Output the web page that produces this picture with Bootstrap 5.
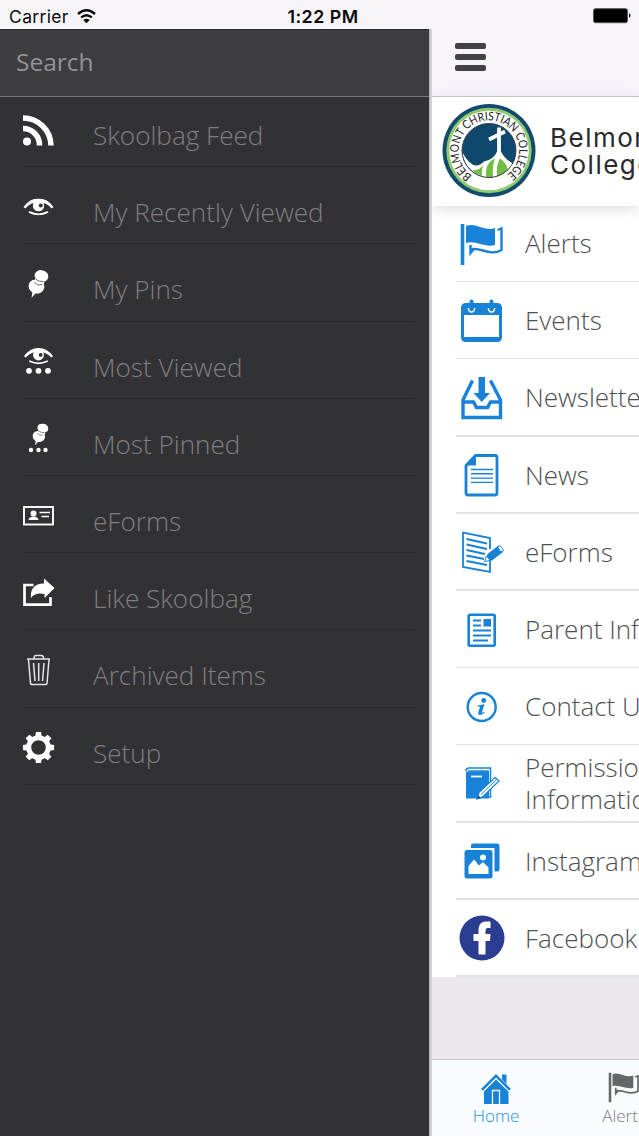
<!DOCTYPE html>
<html lang="en">
<head>
    <meta charset="UTF-8">
    <meta name="viewport" content="width=device-width, initial-scale=1.0">
    <title>Skoolbag</title>
    <link rel="stylesheet" href="https://cdn.jsdelivr.net/npm/bootstrap@5.3.2/dist/css/bootstrap.min.css">
    <style>
        body { font-family: "Open Sans", sans-serif; font-weight: 300; background: #f6f4f9; }
        .screen { height: 1136px; overflow: hidden; }
        svg { display: block; flex: none; }

        .status-bar { height: 29px; font: 400 17.5px/29px "Inter", sans-serif; color: #0a0a0a; padding: 3px 4px 0 9px; }
        .status-bar > div { width: 210px; }
        .carrier { letter-spacing: .35px; }
        .clock { font-weight: 600; font-size: 17.8px; letter-spacing: .5px; padding-left: 2px; }

        .drawer { width: 429px; background: #323133; }
        .search-box { height: 68px; background: #3d3c3e; border-bottom: 1px solid #777678; border-top: 1px solid #2b2a2c; padding: 0 0 1px 16px; color: #949396; font-size: 24.5px; font-weight: 400; }
        .drawer-list { margin-top: -7px; }
        .drawer-item { height: 77.2px; padding: 14px 0 0 22px; color: #7f7e82; font-size: 26.1px; }
        .drawer-item svg { margin: -11px 38px 0 0; width: 33px; height: 34px; color: #fff; }
        .drawer-line { height: 1px; margin: -1px 14px 0 24px; background: #29282a; }

        .edge { width: 3px; background: linear-gradient(90deg, #a9a8ac, #cfced2 50%, #d8d6db); }
        .main-nav { height: 68px; border-bottom: 1px solid #b9b8bb; padding: 14px 0 0 23px; gap: 5px; }
        .main-nav span { width: 31px; height: 6px; border-radius: 2px; background: #424144; }
        .school { height: 109px; background: #fff; padding: 0 0 2px 10px; box-shadow: 0 3px 14px #dddbe0; position: relative; }
        .school-name { font: 400 26px/27px "Inter", sans-serif; color: #2a2a2a; padding-left: 14px; letter-spacing: 1.5px; }
        .menu-row { height: 77.2px; padding: 0 0 1px 27px; background: #fff; color: #4e4f53; font-size: 26px; line-height: 32px; }
        .menu-row svg { width: 46px; height: 46px; margin: 1px 20px 0 0; color: #1782d8; }
        .menu-line { height: 1.6px; margin: -1.6px 0 0 24px; background: #e1e4e8; position: relative; }
        .filler { background: #eae8eb; }
        .tab-bar { height: 77px; background: #f9fcfe; border-top: 1px solid #c5c5c8; font-size: 17px; line-height: 20px; }
        .tab-bar > div { width: 128px; padding-top: 12px; gap: 1px; color: #7d7e82; }
        .tab-bar .tab-on { color: #1f8edc; }
    </style>
</head>
<body>
    <!-- shared icon shapes -->
    <svg width="0" height="0" class="position-absolute">
        <symbol id="eye" viewBox="0 0 33 18">
            <path d="M.5 9Q7 0 16.500 0Q26 0 32.500 9L30.500 10.500Q25 4 16.500 4Q8 4 2.500 10.500Z" fill="currentColor"/>
            <path d="M7 14.500Q16.500 19 26 14.500" fill="none" stroke="currentColor" stroke-width="1.900" stroke-linecap="round"/>
            <circle cx="16.500" cy="7.600" r="6" fill="currentColor"/>
            <circle cx="18.900" cy="7.500" r="2.100" fill="#323133"/>
        </symbol>
        <symbol id="pin" viewBox="0 0 20 28">
            <ellipse cx="13" cy="6" rx="7" ry="5.800" fill="currentColor" transform="rotate(15 13 6)"/>
            <path d="M7 9L16 12L14 17L5 14Z" fill="currentColor"/>
            <ellipse cx="8" cy="16.500" rx="8" ry="7" fill="currentColor" transform="rotate(15 8 16)"/>
            <path d="M6 12.500Q9 16.500 13.500 14.500M7.500 9.500Q11 12 15 11.500" fill="none" stroke="#323133" stroke-width=".7"/>
            <path d="M4 21.500L3 28L8 22Z" fill="currentColor"/>
        </symbol>
        <symbol id="flag" viewBox="0 0 46 46">
            <path d="M3.500 3v41" stroke="currentColor" stroke-width="3.600"/>
            <path d="M7 5C17 1 25 11 36 7V24C25 27 17 19 7 22Z" fill="currentColor"/>
            <path d="M38.500 9L42.500 7.500V29C30 36 21 25 11.500 28.500M11.500 24V32L15 28" fill="none" stroke="currentColor" stroke-width="2.400"/>
        </symbol>
    </svg>

    <div class="screen d-flex flex-column">
        <div class="status-bar d-flex justify-content-between align-items-center">
            <div class="carrier d-flex align-items-center">Carrier
                <svg class="ms-2" width="19" height="15" viewBox="0 0 19 15" fill="none" stroke="#0a0a0a" stroke-width="2.400">
                    <path d="M1 5Q9.500 -2.400 18 5M4.200 8.400Q9.500 4 14.800 8.400"/>
                    <path d="M9.500 14.300L6.300 11Q9.500 8.400 12.700 11Z" fill="#0a0a0a" stroke="none"/>
                </svg>
            </div>
            <div class="clock text-center">1:22 PM</div>
            <div class="d-flex justify-content-end">
                <svg width="42" height="16" viewBox="0 0 42 16"><rect x=".5" y=".7" width="34" height="14" rx="2" fill="#000" stroke="#555"/><path d="M36 5.300Q39 7.500 36 10Z"/></svg>
            </div>
        </div>

        <div class="d-flex flex-grow-1">
            <div class="drawer flex-shrink-0">
                <div class="search-box d-flex align-items-center">Search</div>
                <div class="drawer-list">
                    <div class="drawer-item d-flex align-items-center">
                        <svg viewBox="0 0 33 34" fill="none" stroke="currentColor" stroke-width="5.500"><circle cx="5" cy="28.500" r="4" fill="currentColor" stroke="none"/><path d="M1 15.500A16.500 16.500 0 0 1 17.500 32.500M1 5A28 28 0 0 1 29 32.500"/></svg>
                        Skoolbag Feed
                    </div>
                    <div class="drawer-line"></div>
                    <div class="drawer-item d-flex align-items-center">
                        <svg viewBox="0 0 33 34"><use href="#eye" x="1" y="8.500" width="31" height="17"/></svg>
                        My Recently Viewed
                    </div>
                    <div class="drawer-line"></div>
                    <div class="drawer-item d-flex align-items-center">
                        <svg viewBox="0 0 33 34"><use href="#pin" x="6.500" y="3" width="20" height="28"/></svg>
                        My Pins
                    </div>
                    <div class="drawer-line"></div>
                    <div class="drawer-item d-flex align-items-center">
                        <svg viewBox="0 0 33 34"><use href="#eye" x="1.500" y="3" width="30" height="16.500"/><g fill="currentColor"><circle cx="7" cy="25.800" r="2.900"/><circle cx="16.500" cy="25.800" r="2.900"/><circle cx="26" cy="25.800" r="2.900"/></g></svg>
                        Most Viewed
                    </div>
                    <div class="drawer-line"></div>
                    <div class="drawer-item d-flex align-items-center">
                        <svg viewBox="0 0 33 34"><use href="#pin" x="10.500" y="1.500" width="16" height="22"/><g fill="currentColor"><circle cx="9" cy="28" r="2.200"/><circle cx="16.500" cy="28" r="2.200"/><circle cx="23.500" cy="28" r="2.200"/></g></svg>
                        Most Pinned
                    </div>
                    <div class="drawer-line"></div>
                    <div class="drawer-item d-flex align-items-center">
                        <svg viewBox="0 0 33 34"><rect x="2" y="8" width="29" height="17.500" fill="none" stroke="currentColor" stroke-width="1.900"/><circle cx="11.500" cy="14.500" r="3" fill="currentColor"/><path d="M6.500 21Q7 17.500 11.500 17.500Q16 17.500 16.500 21Z" fill="currentColor"/><path d="M17.500 13.500H28M19.500 17.500H27" stroke="currentColor" stroke-width="1.500"/></svg>
                        eForms
                    </div>
                    <div class="drawer-line"></div>
                    <div class="drawer-item d-flex align-items-center">
                        <svg viewBox="0 0 33 34"><path d="M11.500 9H2.500V28.700H28.500V21" fill="none" stroke="currentColor" stroke-width="2.700"/><path d="M9 22Q7.500 8 22 7.500V2.500L32.500 12L22.500 22V18Q13 16 9 22Z" fill="currentColor"/></svg>
                        Like Skoolbag
                    </div>
                    <div class="drawer-line"></div>
                    <div class="drawer-item d-flex align-items-center">
                        <svg viewBox="0 0 33 34" fill="none" stroke="#e4e4e6" stroke-width="1.500"><path d="M5 6H28M12 5.500Q12 2.500 14 2.500H19.500Q21.500 2.500 21.500 5.500M6.500 6.500L8.500 30.500Q8.700 31.500 10 31.500H23.500Q24.700 31.500 25 30.500L27 6.500M11.500 10L13 28M16.700 10V28M22 10L20.500 28"/></svg>
                        Archived Items
                    </div>
                    <div class="drawer-line"></div>
                    <div class="drawer-item d-flex align-items-center">
                        <svg viewBox="0 0 33 34"><g transform="translate(16.500 16.500)"><circle r="9.800" fill="none" stroke="currentColor" stroke-width="5"/><g fill="currentColor"><path id="tooth" d="M-3.200-11L-2.600-15.600H2.600L3.200-11Z"/><use href="#tooth" transform="rotate(45)"/><use href="#tooth" transform="rotate(90)"/><use href="#tooth" transform="rotate(135)"/><use href="#tooth" transform="rotate(180)"/><use href="#tooth" transform="rotate(225)"/><use href="#tooth" transform="rotate(270)"/><use href="#tooth" transform="rotate(315)"/></g></g></svg>
                        Setup
                    </div>
                    <div class="drawer-line"></div>
                </div>
            </div>
            <div class="edge flex-shrink-0"></div>

            <div class="d-flex flex-column flex-grow-1 overflow-hidden text-nowrap">
                <div class="main-nav d-flex flex-column flex-shrink-0">
                    <span></span><span></span><span></span>
                </div>
                <div class="school d-flex align-items-center flex-shrink-0">
                    <svg width="94" height="94" viewBox="-47 -46.500 94 94">
                        <circle r="46.500" fill="#114b6d"/>
                        <circle r="42.700" fill="#8fca72"/>
                        <circle r="39.800" fill="#fff"/>
                        <circle r="27" fill="#10476c"/>
                        <path d="M-26.500 2Q-16 22 -5 11Q5 9 8 1H12Q16 9 24 13A27 27 0 0 1 -26.500 2Z" fill="#fff"/>
                        <path d="M-3 26Q-4 12 6 8Q3 16 4 27Q0 27 -3 26ZM8 26Q7 14 11 8Q17 12 19 19Q14 24 8 26ZM-17 20Q-8 20 -4 12Q-8 18 -7 25Q-12 24 -17 20Z" fill="#72bd44"/>
                        <path d="M10 -23V5M0 -11L16 -19" stroke="#fff" stroke-width="3.800"/>
                        <circle r="27" fill="none" stroke="#333f48" stroke-width="1"/>
                        <path id="ring" d="M-17 25A30.200 30.200 0 1 1 17 25" fill="none"/>
                        <text font-family="Lato, sans-serif" font-size="12" font-weight="400" fill="#1c1c1c"><textPath href="#ring" textLength="152" lengthAdjust="spacingAndGlyphs">BELMONT CHRISTIAN COLLEGE</textPath></text>
                    </svg>
                    <div class="school-name">Belmont Christian<br>College</div>
                </div>

                <div class="menu-row d-flex align-items-center flex-shrink-0" style="margin-top: -1px">
                    <svg viewBox="0 0 46 46"><use href="#flag" width="46" height="46"/></svg>
                    Alerts
                </div>
                <div class="menu-line flex-shrink-0"></div>
                <div class="menu-row d-flex align-items-center flex-shrink-0">
                    <svg viewBox="0 0 46 46"><rect x="3.500" y="6.500" width="38" height="36" rx="3" fill="none" stroke="currentColor" stroke-width="3"/><path d="M3 7H42V17H3ZM3 39H42V42H3Z" fill="currentColor"/><path d="M9.500 10Q9.500 14 12.500 14Q15.500 14 15.500 10M29.500 10Q29.500 14 32.500 14Q35.500 14 35.500 10" fill="none" stroke="#fff" stroke-width="1.600"/><path d="M12.500 3.500V11M32.500 3.500V11" stroke="currentColor" stroke-width="4" stroke-linecap="round"/></svg>
                    Events
                </div>
                <div class="menu-line flex-shrink-0"></div>
                <div class="menu-row d-flex align-items-center flex-shrink-0">
                    <svg viewBox="0 0 46 46"><path d="M13.500 5.500L4 25V42.500H41.500V25L31.500 5.500M4 27H14.500L17.500 32.500H28.500L31.500 27H41.500" fill="none" stroke="currentColor" stroke-width="3.400"/><path d="M19.500 2H26V18H31L22.700 27L14.500 18H19.500Z" fill="currentColor"/></svg>
                    Newsletters
                </div>
                <div class="menu-line flex-shrink-0"></div>
                <div class="menu-row d-flex align-items-center flex-shrink-0">
                    <svg viewBox="0 0 46 46"><path d="M16.500 3.500H36Q38 3.500 38 5.500V41Q38 43 36 43H9Q7 43 7 41V13.500Z" fill="none" stroke="currentColor" stroke-width="2.800"/><path d="M17 3V13.500H7Z" fill="currentColor"/><path d="M12 17.500H34M12 21.800H34M12 26.100H34M12 30.400H34" stroke="currentColor" stroke-width="1.400"/></svg>
                    News
                </div>
                <div class="menu-line flex-shrink-0"></div>
                <div class="menu-row d-flex align-items-center flex-shrink-0">
                    <svg viewBox="0 0 46 46" fill="none" stroke="currentColor" stroke-width="1.800"><path d="M31 20V9L4 3.500V38L31 43V32M7.500 10L28 14.500M7.500 15.500L28 20M7.500 21L26 25M7.500 26.500L25 30M7.500 32L28 36"/><path d="M28.500 25L39.500 16.500L44 23L33 31.500L26.500 32Z" fill="currentColor" stroke="none"/><path d="M25.500 32.500L27.500 27L31.500 31.500Z" fill="#fff" stroke-width="1"/><ellipse cx="41.700" cy="19.800" rx="1.800" ry="3.400" transform="rotate(-38 41.700 19.800)" fill="#fff" stroke-width=".9"/></svg>
                    eForms
                </div>
                <div class="menu-line flex-shrink-0"></div>
                <div class="menu-row d-flex align-items-center flex-shrink-0">
                    <svg viewBox="0 0 46 46"><rect x="9.700" y="7.700" width="26" height="31" rx="1.500" fill="none" stroke="currentColor" stroke-width="2.600"/><path d="M24.500 12H32V19.500H24.500Z" fill="currentColor"/><path d="M14 13.500H22M14 18.500H22M14 23.500H32M14 28.500H32M14 33.500H29" stroke="currentColor" stroke-width="2.200"/></svg>
                    Parent Information
                </div>
                <div class="menu-line flex-shrink-0"></div>
                <div class="menu-row d-flex align-items-center flex-shrink-0">
                    <svg viewBox="0 0 46 46"><circle cx="22.700" cy="23" r="14" fill="none" stroke="currentColor" stroke-width="2.400"/><circle cx="24.700" cy="16.500" r="2.400" fill="currentColor"/><path d="M18.500 21.500Q22 21.300 25.500 20L23 28.200Q23 29.500 25.500 27.500L26 28.500Q22.500 31.500 20 30.800Q18.700 30 19.500 27.500L21 23Q20.500 22.300 18.500 22.500Z" fill="currentColor"/></svg>
                    Contact Us
                </div>
                <div class="menu-line flex-shrink-0"></div>
                <div class="menu-row d-flex align-items-center flex-shrink-0">
                    <svg viewBox="0 0 46 46"><path d="M7 10Q7 7 10 7H31.500V36H29V10H9" fill="none" stroke="currentColor" stroke-width="1.500"/><path d="M7 10.500H30V37.500H7Z" fill="currentColor"/><path d="M12 15.500H23" stroke="#fff" stroke-width="1.800"/><path d="M18 38L20 31.500L36 16.500L40 20L24 35.500Z" fill="#fff" stroke="currentColor" stroke-width="1.200"/><path d="M22 33.500L38 18M18 38L19 34.500L21.500 37Z" stroke="currentColor" stroke-width="1"/></svg>
                    <div>Permission<br>Information</div>
                </div>
                <div class="menu-line flex-shrink-0"></div>
                <div class="menu-row d-flex align-items-center flex-shrink-0">
                    <svg viewBox="0 0 46 46"><path d="M12 9V7Q12 5.500 14 5.500H38Q40.500 5.500 40.500 8V31Q40.500 33.500 38 33.500H35.500V10H12Z" fill="currentColor"/><rect x="5.500" y="12" width="28" height="28.500" rx="2.500" fill="currentColor"/><path d="M9.500 36V28L15 21.500L20 27.500L24 24L29.500 29.500V36Z" fill="#fff"/><circle cx="24" cy="19.500" r="3" fill="#fff"/></svg>
                    Instagram
                </div>
                <div class="menu-line flex-shrink-0"></div>
                <div class="menu-row d-flex align-items-center flex-shrink-0">
                    <svg viewBox="0 0 46 46"><circle cx="23" cy="23" r="22.500" fill="#2b3d91"/><path d="M19.500 39.500V26H14.500V19H19.500V15.500Q19.500 6.500 27 6.500H31.500V13H28.500Q26.500 13 26.500 15.500V19H31.500L31 26H26.500V39.500Z" fill="#fff"/></svg>
                    Facebook
                </div>
                <div class="menu-line flex-shrink-0"></div>

                <div class="filler flex-grow-1"></div>
                <div class="tab-bar d-flex flex-shrink-0">
                    <div class="tab-on d-flex flex-column align-items-center flex-shrink-0">
                        <svg width="32" height="33" viewBox="0 0 32 33"><path d="M1 17L16 2L31 17L29 18.500L16 5.500L3 18.500ZM22 2.500H26.500V12L22 7.500ZM4 19.500L16 7.500L28.500 19.500V32H4Z" fill="#1782d8"/><path d="M12.500 32V18.500H19.500V32" fill="#1782d8" stroke="#fff" stroke-width="1.300"/></svg>
                        <span>Home</span>
                    </div>
                    <div class="d-flex flex-column align-items-center flex-shrink-0">
                        <svg width="34" height="33" viewBox="0 2 46 46" color="#66676a"><use href="#flag" width="46" height="46"/></svg>
                        <span>Alerts</span>
                    </div>
                </div>
            </div>
        </div>
    </div>
    <script src="https://cdn.jsdelivr.net/npm/bootstrap@5.3.2/dist/js/bootstrap.bundle.min.js"></script>
</body>
</html>
